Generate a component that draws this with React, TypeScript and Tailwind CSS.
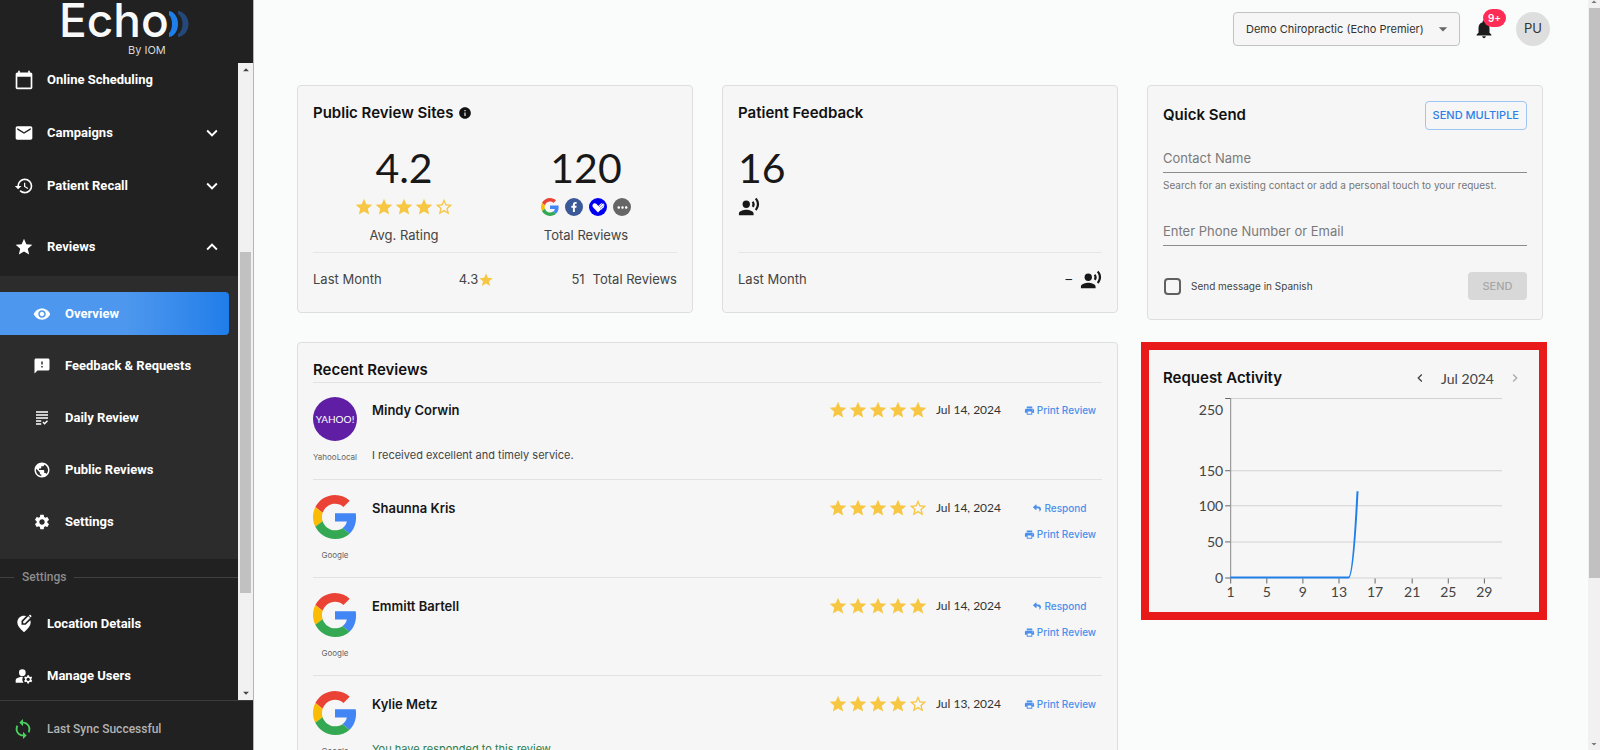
import React from 'react';
import {
    MdArrowDropDown,
    MdArrowDropUp,
    MdCalendarToday,
    MdChevronLeft,
    MdChevronRight,
    MdEditLocationAlt,
    MdEmail,
    MdFeedback,
    MdGrading,
    MdHistory,
    MdInfo,
    MdKeyboardArrowDown,
    MdKeyboardArrowUp,
    MdManageAccounts,
    MdMoreHoriz,
    MdNotifications,
    MdPrint,
    MdPublic,
    MdRecordVoiceOver,
    MdSettings,
    MdStar,
    MdStarBorder,
    MdSync,
    MdVisibility,
} from 'react-icons/md';
import { FaFacebookF, FaReply } from 'react-icons/fa';
import { IconType } from 'react-icons';

interface Review {
    name: string;
    source: 'YahooLocal' | 'Google';
    stars: number;
    date: string;
    text?: string;
    responded?: boolean;
    canRespond?: boolean;
}

const REVIEWS: Review[] = [
    { name: 'Mindy Corwin', source: 'YahooLocal', stars: 5, date: 'Jul 14, 2024', text: 'I received excellent and timely service.' },
    { name: 'Shaunna Kris', source: 'Google', stars: 4, date: 'Jul 14, 2024', canRespond: true },
    { name: 'Emmitt Bartell', source: 'Google', stars: 5, date: 'Jul 14, 2024', canRespond: true },
    { name: 'Kylie Metz', source: 'Google', stars: 4, date: 'Jul 13, 2024', text: 'You have responded to this review.', responded: true },
];

const SUB_ITEMS: { label: string; icon: IconType; active?: boolean }[] = [
    { label: 'Overview', icon: MdVisibility, active: true },
    { label: 'Feedback & Requests', icon: MdFeedback },
    { label: 'Daily Review', icon: MdGrading },
    { label: 'Public Reviews', icon: MdPublic },
    { label: 'Settings', icon: MdSettings },
];

const GoogleLogo = ({ className }: { className?: string }) => (
    <svg viewBox="0 0 48 48" className={className}>
        <path fill="#ea4335" d="M24 9.5c3.54 0 6.71 1.22 9.21 3.6l6.85-6.85C35.9 2.38 30.47 0 24 0 14.62 0 6.51 5.38 2.56 13.22l7.98 6.19C12.43 13.72 17.74 9.5 24 9.5z" />
        <path fill="#4285f4" d="M46.98 24.55c0-1.57-.15-3.09-.38-4.55H24v9.02h12.94c-.58 2.96-2.26 5.48-4.78 7.18l7.73 6c4.51-4.18 7.09-10.36 7.09-17.65z" />
        <path fill="#fbbc05" d="M10.53 28.59c-.48-1.45-.76-2.99-.76-4.59s.27-3.14.76-4.59l-7.98-6.19C.92 16.46 0 20.12 0 24c0 3.88.92 7.54 2.56 10.78l7.97-6.19z" />
        <path fill="#34a853" d="M24 48c6.48 0 11.93-2.13 15.89-5.81l-7.73-6c-2.15 1.45-4.92 2.3-8.16 2.3-6.26 0-11.57-4.22-13.47-9.91l-7.98 6.19C6.51 42.62 14.62 48 24 48z" />
    </svg>
);

const Stars = ({ count }: { count: number }) => (
    <div className="flex text-[#f7c744]">
        {[1, 2, 3, 4, 5].map(n => (n <= count ? <MdStar key={n} size={20} /> : <MdStarBorder key={n} size={20} />))}
    </div>
);

const Card = ({ className = '', children }: { className?: string; children: React.ReactNode }) => (
    <section className={`rounded border border-[#dedede] bg-[#f6f6f6] px-[15px] ${className}`}>{children}</section>
);

const Title = ({ children }: { children: React.ReactNode }) => (
    <h2 className="flex h-6 items-center gap-[5px] text-[15px] font-semibold text-[#111]">{children}</h2>
);

const NavItem = ({ label, icon: Icon, arrow, className = '' }: { label: string; icon: IconType; arrow?: 'up' | 'down'; className?: string }) => (
    <a href="#" className={`flex shrink-0 items-center gap-[13px] pr-[15px] pl-[14px] ${className}`}>
        <Icon size={20} />
        <span className="flex-1">{label}</span>
        {arrow === 'down' && <MdKeyboardArrowDown size={22} />}
        {arrow === 'up' && <MdKeyboardArrowUp size={22} />}
    </a>
);

const Sidebar = () => (
    <aside className="flex w-[254px] shrink-0 flex-col border-r border-[#b5b5b5] bg-[#212121] font-['Roboto',sans-serif] text-[13px] font-bold text-white">
        <div className="h-[63px] shrink-0 pl-[59px] font-['Inter',sans-serif]">
            <div className="flex h-10 items-center">
                <span className="text-[46px] leading-10 font-medium text-[#f8fafa]">Echo</span>
                <svg viewBox="0 0 20 26" className="mt-2 h-[26px] w-5">
                    <path fill="#1f7fea" d="M0 0c12 2 12 24 0 26v-4c4-3 4-15 0-18z" />
                    <path fill="#24487a" d="M9 0c14 2 14 24 0 26v-3c6-4 6-16 0-20z" />
                </svg>
            </div>
            <div className="pl-[69px] text-[11px] leading-5 font-normal text-[#d8d8d8]">By IOM</div>
        </div>

        <div className="flex min-h-0 flex-1">
            <nav className="flex min-w-0 flex-1 flex-col overflow-hidden">
                <NavItem label="Online Scheduling" icon={MdCalendarToday} className="mb-[14px] h-[34px]" />
                <NavItem label="Campaigns" icon={MdEmail} arrow="down" className="mb-[10px] h-[43px]" />
                <NavItem label="Patient Recall" icon={MdHistory} arrow="down" className="mb-[18px] h-[43px]" />
                <NavItem label="Reviews" icon={MdStar} arrow="up" className="mb-2 h-[43px]" />
                <div className="flex shrink-0 flex-col gap-[9px] bg-[#2c2c2c] py-4 pr-[9px]">
                    {SUB_ITEMS.map(({ label, icon: Icon, active }) => (
                        <a
                            key={label}
                            href="#"
                            className={`flex h-[43px] items-center gap-[14px] rounded-r pl-[33px] ${active ? 'bg-linear-to-r from-[#4d98ee] from-55% to-[#1f7de9]' : ''}`}
                        >
                            <Icon size={18} />
                            {label}
                        </a>
                    ))}
                </div>
                <div className="flex h-9 shrink-0 items-center gap-2 text-[12px] font-medium text-[#8c8c8c]">
                    <span className="h-px w-[14px] bg-[#404040]"></span>
                    Settings
                    <span className="h-px flex-1 bg-[#404040]"></span>
                </div>
                <NavItem label="Location Details" icon={MdEditLocationAlt} className="mt-[7px] mb-[9px] h-[43px]" />
                <NavItem label="Manage Users" icon={MdManageAccounts} className="h-[43px]" />
            </nav>
            <div className="flex w-[15px] flex-col items-center bg-[#f1f1f1] text-[#444]">
                <MdArrowDropUp size={14} />
                <div className="mt-[175px] h-[341px] w-[11px] bg-[#c1c1c1]"></div>
                <MdArrowDropDown size={14} className="mt-auto" />
            </div>
        </div>

        <div className="flex h-[50px] shrink-0 items-center gap-[13px] border-t border-[#3c3c3c] pt-[6px] pl-3 text-[12px] font-medium text-[#b3b3b3]">
            <MdSync size={22} className="text-[#4cd05f]" />
            Last Sync Successful
        </div>
    </aside>
);

const TopBar = () => (
    <header className="flex h-[58px] items-center justify-end pr-[38px]">
        <div className="relative">
            <select aria-label="Location" className="h-[34px] w-[227px] appearance-none rounded border border-[#c2c2c2] bg-[#f6f6f6] pl-3 text-[11px] text-[#333]">
                <option>Demo Chiropractic (Echo Premier)</option>
            </select>
            <MdArrowDropDown size={20} className="pointer-events-none absolute top-[7px] right-[7px] text-[#666]" />
        </div>
        <button aria-label="Notifications" className="relative ml-[13px] text-[#1c1c1c]">
            <MdNotifications size={22} />
            <span className="absolute -top-[9px] left-[10px] flex h-[18px] w-[23px] items-center justify-center rounded-full bg-[#ff2d55] text-[10px] font-semibold text-white">9+</span>
        </button>
        <button className="ml-[21px] size-[34px] rounded-full bg-[#dedede] text-[13px] text-[#333]">PU</button>
    </header>
);

const PublicReviewSites = () => (
    <Card className="h-[228px] pt-[15px]">
        <Title>
            Public Review Sites <MdInfo size={14} />
        </Title>
        <div className="mt-[19px] grid grid-cols-2 border-b border-[#e6e6e6] pb-[7px] text-[13px] text-[#444]">
            <div className="flex flex-col items-center">
                <div className="font-['Lato',sans-serif] text-[41px] leading-12 text-[#181818]">4.2</div>
                <div className="mt-[5px]"><Stars count={4} /></div>
                <div className="mt-2 leading-5">Avg. Rating</div>
            </div>
            <div className="flex flex-col items-center">
                <div className="font-['Lato',sans-serif] text-[41px] leading-12 text-[#181818]">120</div>
                <div className="mt-[5px] flex h-5 items-center gap-[6px] text-white">
                    <GoogleLogo className="size-[18px]" />
                    <span className="flex size-[18px] items-center justify-center rounded-full bg-[#3b5998]"><FaFacebookF size={10} /></span>
                    <svg viewBox="0 0 18 18" className="size-[18px]">
                        <circle cx="9" cy="9" r="9" fill="#0000f0" />
                        <path fill="#fff" d="M9 14.5 4.2 9.6C2.4 7.6 4.1 4.7 6.5 5.4 7.9 5.8 8.4 7 9.3 8l3.2-3 .6 1 1.2-.9.3 1.5 1.1.1-1 1.7.5.9-1.7.7-.3 1.2-1.3.2z" />
                        <path stroke="#0000f0" strokeWidth=".5" d="m10 9 3.5-3.5M11 10.5l3.5-3" />
                    </svg>
                    <span className="flex size-[18px] items-center justify-center rounded-full bg-[#666]"><MdMoreHoriz size={15} /></span>
                </div>
                <div className="mt-2 leading-5">Total Reviews</div>
            </div>
        </div>
        <div className="mt-[17px] flex h-5 items-center justify-between text-[13px] text-[#444]">
            <span>Last Month</span>
            <span className="flex items-center">4.3<MdStar size={16} className="text-[#f7c744]" /></span>
            <span className="flex gap-2"><span>51</span>Total Reviews</span>
        </div>
    </Card>
);

const PatientFeedback = () => (
    <Card className="flex h-[228px] flex-col pt-[15px]">
        <Title>Patient Feedback</Title>
        <div className="mt-[19px] h-[109px] border-b border-[#e6e6e6] text-[#181818]">
            <div className="font-['Lato',sans-serif] text-[41px] leading-12">16</div>
            <MdRecordVoiceOver size={22} className="mt-1" />
        </div>
        <div className="mt-[17px] flex h-5 items-center text-[13px] text-[#444]">
            <span className="flex-1">Last Month</span>
            <span className="mr-2 text-[#222]">–</span>
            <MdRecordVoiceOver size={22} className="text-[#181818]" />
        </div>
    </Card>
);

const QuickSend = () => (
    <Card className="pt-[14px] pb-[19px]">
        <div className="flex h-[30px] items-center justify-between">
            <Title>Quick Send</Title>
            <button className="h-[29px] rounded border border-[#9cc4f5] px-[7px] text-[11px] font-medium text-[#2f7fe6]">SEND MULTIPLE</button>
        </div>
        <input
            aria-label="Contact Name"
            placeholder="Contact Name"
            className="mt-[14px] block h-[29px] w-full border-b border-[#8c8c8c] bg-transparent text-[13px] placeholder:text-[#7a7a7a]"
        />
        <p className="mt-1 text-[10px] leading-4 text-[#777]">Search for an existing contact or add a personal touch to your request.</p>
        <input
            aria-label="Enter Phone Number or Email"
            placeholder="Enter Phone Number or Email"
            className="mt-6 block h-[29px] w-full border-b border-[#8c8c8c] bg-transparent text-[13px] placeholder:text-[#7a7a7a]"
        />
        <div className="mt-[26px] flex h-7 items-center justify-between">
            <label className="flex items-center gap-[10px] pl-px text-[10px] text-[#444]">
                <input type="checkbox" className="size-[17px] appearance-none rounded-sm border-2 border-[#606060]" />
                Send message in Spanish
            </label>
            <button disabled className="h-7 w-[59px] rounded bg-[#d8d8d8] text-[11px] font-medium text-[#a6a6a6]">SEND</button>
        </div>
    </Card>
);

const ReviewRow = ({ review }: { review: Review }) => (
    <div className="flex h-[98px] border-t border-[#e2e2e2] pt-[15px] first:h-[97px] first:pt-[14px]">
        <div className="flex w-11 shrink-0 flex-col items-center">
            {review.source === 'Google' ? (
                <GoogleLogo className="size-11" />
            ) : (
                <div className="flex size-11 items-center justify-center rounded-full bg-[#5f1ea3] font-['Lato',sans-serif] text-[10px] text-white">YAHOO!</div>
            )}
            <div className="mt-2 text-[8px] leading-4 text-[#666]">{review.source}</div>
        </div>
        <div className="flex-1 pt-[3px] pl-[15px]">
            <div className="text-[13px] leading-5 font-semibold text-[#161616]">{review.name}</div>
            {review.text && (
                <p className={`mt-[25px] text-[11px] leading-5 ${review.responded ? 'text-[#2e7d4f]' : 'text-[#444]'}`}>{review.text}</p>
            )}
        </div>
        <div className="mt-[3px] flex h-5 items-center">
            <Stars count={review.stars} />
            <span className="ml-2 font-['Lato',sans-serif] text-[12px] text-[#333]">{review.date}</span>
        </div>
        <div className="ml-[17px] flex w-[84px] flex-col items-center gap-[6px] pt-[3px] text-[10px] leading-5 font-medium text-[#4a90ec]">
            {review.canRespond && (
                <button className="flex items-center gap-[3px]"><FaReply size={8} />Respond</button>
            )}
            <button className="flex items-center gap-[2px]"><MdPrint size={11} />Print Review</button>
        </div>
    </div>
);

const RecentReviews = () => (
    <Card className="col-span-2 pt-[15px]">
        <Title>Recent Reviews</Title>
        <div>
            {REVIEWS.map(review => <ReviewRow key={review.name} review={review} />)}
        </div>
    </Card>
);

const Y_TICKS = [0, 50, 100, 150, 250];
const X_TICKS = [1, 5, 9, 13, 17, 21, 25, 29];
const yPos = (v: number) => 187.5 - Math.round(v * 0.716);
const xPos = (d: number) => 67.5 + Math.round((d - 1) * 9.03);

const ActivityChart = () => (
    <svg viewBox="0 0 364 211" className="w-full font-['Lato',sans-serif] text-[14px]">
        {Y_TICKS.map(v => (
            <g key={v}>
                <path d={`M67 ${yPos(v)}H338`} stroke="#d2d2d2" />
                <path d={`M62 ${yPos(v)}H67`} stroke="#666" />
                <text x="60" y={yPos(v) + (v === 250 ? 16 : 5)} textAnchor="end" fill="#444">{v}</text>
            </g>
        ))}
        <path d="M67.5 8V188" stroke="#888" />
        {X_TICKS.map(d => (
            <g key={d}>
                <path d={`M${xPos(d)} 188V193`} stroke="#666" />
                <text x={xPos(d)} y="206" textAnchor="middle" fill="#444">{d}</text>
            </g>
        ))}
        <path d="M67 187H185C188 187 191 160 194 101" fill="none" stroke="#2080e8" strokeWidth="2" />
    </svg>
);

const RequestActivity = () => (
    <section className="-mr-1 -ml-[6px] border-8 border-[#e81a1a] bg-[#f6f6f6] pt-4 pr-[11px] pb-[10px] pl-[14px]">
        <div className="flex h-6 items-center justify-between">
            <Title>Request Activity</Title>
            <div className="mr-[5px] flex items-center gap-[13px] font-['Lato',sans-serif] text-[14px] text-[#444]">
                <button aria-label="Previous month"><MdChevronLeft size={16} /></button>
                Jul 2024
                <button aria-label="Next month" disabled className="text-[#aaa]"><MdChevronRight size={16} /></button>
            </div>
        </div>
        <ActivityChart />
    </section>
);

export default function App() {
    return (
        <div className="flex h-screen overflow-hidden bg-[#fafbfb] font-['Inter',sans-serif]">
            <Sidebar />
            <main className="min-w-0 flex-1 overflow-hidden">
                <TopBar />
                <div className="mt-[27px] grid grid-cols-3 items-start gap-x-[29px] gap-y-[22px] pr-[45px] pl-[43px]">
                    <PublicReviewSites />
                    <PatientFeedback />
                    <QuickSend />
                    <RecentReviews />
                    <RequestActivity />
                </div>
            </main>
            <div className="flex w-3 shrink-0 flex-col items-center bg-[#f1f1f1] text-[#777]">
                <MdArrowDropUp size={12} className="-mt-1" />
                <div className="h-[570px] w-[11px] bg-[#c1c1c1]"></div>
                <MdArrowDropDown size={12} className="mt-auto" />
            </div>
        </div>
    );
}
